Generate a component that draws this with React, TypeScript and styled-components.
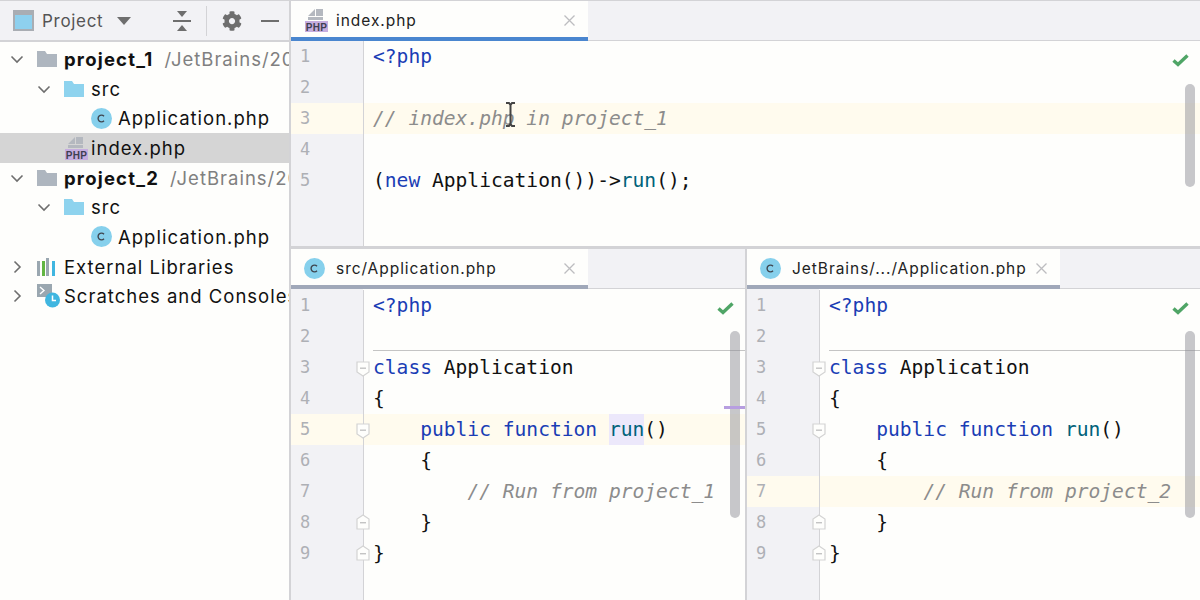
import React from "react";
import styled, { createGlobalStyle } from "styled-components";
import { FaCog } from "react-icons/fa";

const uiFont = `Inter, "Noto Sans", sans-serif`;
const monoFont = `"DejaVu Sans Mono", "Liberation Mono", monospace`;

const GlobalStyle = createGlobalStyle`
  html, body {
    margin: 0;
    padding: 0;
    background: #fefefc;
    overflow: hidden;
  }
`;

const Page = styled.div`
  display: flex;
  width: 1200px;
  height: 600px;
  box-sizing: border-box;
  border-top: 1px solid #d3d3d6;
  background: #fefefc;
  overflow: hidden;
`;

const Sidebar = styled.div`
  width: 291px;
  flex-shrink: 0;
  box-sizing: border-box;
  border-right: 2px solid #d3d3d6;
  display: flex;
  flex-direction: column;
`;

const SideHeader = styled.div`
  height: 39px;
  flex-shrink: 0;
  display: flex;
  align-items: center;
  padding-left: 13px;
  padding-right: 10px;
  background: #f2f2f5;
  border-bottom: 2px solid #d3d3d6;
`;

const SideTitle = styled.span`
  font: 17px ${uiFont};
  letter-spacing: 0.7px;
  color: #555;
  margin-left: 8px;
`;

const Caret = styled.span`
  width: 0;
  height: 0;
  margin-left: 14px;
  border-left: 7px solid transparent;
  border-right: 7px solid transparent;
  border-top: 8px solid #6e6e6e;
`;

const HeaderTools = styled.div`
  margin-left: auto;
  display: flex;
  align-items: center;
  gap: 15px;
`;

const ToolDivider = styled.span`
  width: 1px;
  height: 30px;
  background: #d3d3d6;
`;

const MinusBar = styled.span`
  width: 18px;
  height: 2px;
  margin-left: 4px;
  background: #6e6e6e;
`;

const TreeList = styled.div`
  padding-top: 2px;
`;

const TreeRow = styled.div<{ $level: number; $selected?: boolean }>`
  height: 29.7px;
  box-sizing: border-box;
  display: flex;
  align-items: center;
  white-space: nowrap;
  overflow: hidden;
  padding-left: ${({ $level }) => 10 + $level * 27}px;
  background: ${({ $selected }) => ($selected ? "#d5d5d5" : "transparent")};
`;

const ChevronSlot = styled.span`
  width: 27px;
  flex-shrink: 0;
  display: flex;
  align-items: center;
`;

const TreeIcon = styled.span`
  width: 27px;
  flex-shrink: 0;
  display: flex;
  align-items: center;
`;

const TreeName = styled.span<{ $bold?: boolean }>`
  font: ${({ $bold }) => ($bold ? 700 : 400)} 18.5px ${uiFont};
  letter-spacing: ${({ $bold }) => ($bold ? 1.2 : 1)}px;
  color: #111;
`;

const TreePath = styled.span`
  font: 18.5px ${uiFont};
  letter-spacing: 1px;
  color: #808080;
  margin-left: 11px;
`;

const Main = styled.div`
  flex: 1;
  min-width: 0;
  display: flex;
  flex-direction: column;
`;

const TopPane = styled.div`
  height: 245px;
  flex-shrink: 0;
  display: flex;
  flex-direction: column;
`;

const BottomPanes = styled.div`
  flex: 1;
  min-height: 0;
  display: grid;
  grid-template-columns: 454px 1fr;
  border-top: 3px solid #d3d3d6;
`;

const BottomPane = styled.div<{ $divided?: boolean }>`
  display: flex;
  flex-direction: column;
  min-width: 0;
  border-left: ${({ $divided }) => ($divided ? "2px solid #d3d3d6" : "none")};
`;

const TabStrip = styled.div`
  height: 40px;
  flex-shrink: 0;
  box-sizing: border-box;
  display: flex;
  background: #f2f2f5;
  border-bottom: 1px solid #d3d3d6;
`;

const Tab = styled.div<{ $width: number; $accent: string }>`
  width: ${({ $width }) => $width}px;
  height: calc(100% + 1px);
  box-sizing: border-box;
  display: flex;
  align-items: center;
  padding: 2px 12px 0 13px;
  background: #fefefc;
  border-bottom: 4px solid ${({ $accent }) => $accent};
`;

const TabIcon = styled.span`
  width: 32px;
  flex-shrink: 0;
  display: flex;
  align-items: center;
`;

const TabName = styled.span`
  flex: 1;
  font: 15.5px ${uiFont};
  letter-spacing: 0.95px;
  color: #222;
  white-space: nowrap;
`;

const EditorBody = styled.div`
  position: relative;
  flex: 1;
  min-height: 0;
  overflow: hidden;
`;

const Lines = styled.div<{ $offset: number }>`
  height: 100%;
  box-sizing: border-box;
  display: flex;
  flex-direction: column;
  font: 19.6px/31px ${monoFont};
  color: #111;
  background: linear-gradient(#f2f2f5, #f2f2f5) left top / 72px ${({ $offset }) => $offset}px no-repeat;
  padding-top: ${({ $offset }) => $offset}px;
`;

const LineRow = styled.div<{ $active?: boolean }>`
  display: flex;
  height: 31px;
  flex-shrink: 0;
  background: ${({ $active }) => ($active ? "#fffbee" : "transparent")};
`;

const Filler = styled.div`
  flex: 1;
  display: flex;
`;

const Gutter = styled.div<{ $active?: boolean }>`
  position: relative;
  width: 73px;
  flex-shrink: 0;
  box-sizing: border-box;
  padding-left: 9px;
  font-size: 17px;
  color: #aeb0b5;
  background: ${({ $active }) => ($active ? "#fffbee" : "#f2f2f5")};
  border-right: 1px solid #d3d3d6;
`;

const FoldMark = styled.span<{ $end?: boolean }>`
  position: absolute;
  right: -7px;
  top: ${({ $end }) => ($end ? 7 : 9)}px;
  display: flex;
`;

const Code = styled.pre<{ $separated?: boolean }>`
  position: relative;
  flex: 1;
  margin: 0;
  padding-left: 9px;
  font: inherit;
  white-space: pre;

  ${({ $separated }) =>
    $separated &&
    `&::after {
      content: "";
      position: absolute;
      left: 9px;
      right: 0;
      bottom: 1px;
      height: 1px;
      background: #c4c4c4;
    }`}
`;

const Kw = styled.span`
  color: #1a3db5;
`;

const Fn = styled.span`
  color: #00627a;
`;

const Comment = styled.span`
  color: #8c8c8c;
  font-style: italic;
`;

const Mark = styled.span`
  display: inline-block;
  background: #ece8fb;
`;

const CheckMark = styled.div`
  position: absolute;
  top: 12px;
  right: 11px;
  display: flex;
`;

const Scrollbar = styled.div<{ $top: number; $height: number }>`
  position: absolute;
  top: ${({ $top }) => $top}px;
  right: 5px;
  width: 10px;
  height: ${({ $height }) => $height}px;
  border-radius: 5px;
  background: rgba(140, 140, 148, 0.48);
`;

const ErrorStripe = styled.div`
  position: absolute;
  top: 117px;
  right: 0;
  width: 21px;
  height: 3px;
  background: #b79ee0;
`;

const Cursor = styled.div`
  position: absolute;
  left: 214px;
  top: 61px;
  display: flex;
`;

const PhpIcon = () => (
  <svg width="24" height="24" viewBox="0 0 24 24">
    <path d="M4 8 L11 1 V8 Z M12 1 H19 V8 H12 Z M4 9 H19 V12 H4 Z" fill="#b4b8bf" />
    <rect x="1" y="13" width="23" height="11" fill="#c5addf" />
    <text x="12.5" y="22.5" textAnchor="middle" fontFamily="Liberation Sans" fontWeight="700" fontSize="10" letterSpacing="0.3" fill="#3f3f52">
      PHP
    </text>
  </svg>
);

const ClassIcon = () => (
  <svg width="21" height="21" viewBox="0 0 21 21">
    <circle cx="10.5" cy="10.5" r="10.5" fill="#86d0ec" />
    <path d="M13 8.2 A3.4 3.4 0 1 0 13 12.8" fill="none" stroke="#3f4650" strokeWidth="1.4" />
  </svg>
);

const FolderIcon = ({ color }: { color: string }) => (
  <svg width="20" height="16" viewBox="0 0 20 16">
    <path d="M0 0 H8 L10 3 H20 V16 H0 Z" fill={color} />
  </svg>
);

const Chevron = ({ open }: { open: boolean }) => (
  <svg width="14" height="14" viewBox="0 0 14 14" fill="none" stroke="#6e6e6e" strokeWidth="1.6">
    <path d={open ? "M1.5 4.5 L7 10 L12.5 4.5" : "M4.5 1.5 L10 7 L4.5 12.5"} />
  </svg>
);

const LibrariesIcon = () => (
  <svg width="20" height="18" viewBox="0 0 20 18">
    <rect x="0" y="3" width="3" height="15" fill="#9aa7b0" />
    <rect x="5" y="3" width="3" height="15" fill="#62b543" />
    <rect x="9" y="0" width="3" height="18" fill="#9aa7b0" />
    <rect x="15" y="3" width="3" height="15" fill="#40b6e0" />
  </svg>
);

const ScratchIcon = () => (
  <svg width="23" height="24" viewBox="0 0 23 24">
    <rect x="0" y="0" width="15" height="13" fill="#9aa7b0" />
    <path d="M3 3 L7 6.5 L3 10" fill="none" stroke="#fff" strokeWidth="1.4" />
    <circle cx="15.5" cy="16" r="7.5" fill="#40b6e0" />
    <path d="M15.5 11.5 V16.5 H19" fill="none" stroke="#fff" strokeWidth="1.5" />
  </svg>
);

const WindowIcon = () => (
  <svg width="21" height="21" viewBox="0 0 21 21">
    <rect x="0" y="0" width="21" height="21" fill="#a9adb3" />
    <rect x="2" y="5" width="17" height="14" fill="#8ed0ee" />
  </svg>
);

const CollapseIcon = () => (
  <svg width="18" height="20" viewBox="0 0 18 20" fill="#6e6e6e">
    <path d="M4 0 H14 L9 6 Z" />
    <rect x="0" y="9" width="18" height="2" />
    <path d="M9 14 L14 20 H4 Z" />
  </svg>
);

const CloseIcon = () => (
  <svg width="13" height="13" viewBox="0 0 13 13" stroke="#bdbdc0" strokeWidth="1.3">
    <path d="M1.5 1.5 L11.5 11.5 M11.5 1.5 L1.5 11.5" />
  </svg>
);

const FoldIcon = ({ end }: { end?: boolean }) => (
  <svg width="14" height="16" viewBox="0 0 14 16">
    <g transform={end ? "rotate(180 7 8)" : undefined}>
      <path d="M1 1 H13 V11 L7 15 L1 11 Z" fill="#fefefc" stroke="#d3d3d3" strokeWidth="1.2" />
    </g>
    <rect x="4" y={end ? 8 : 6.5} width="6" height="1.4" fill="#c4c4c4" />
  </svg>
);

const CheckIcon = () => (
  <svg width="17" height="14" viewBox="0 0 17 14">
    <path d="M1.5 7.5 L6 11.5 L15.5 2.5" fill="none" stroke="#4fa566" strokeWidth="3.4" />
  </svg>
);

const IBeam = () => (
  <svg width="11" height="25" viewBox="0 0 11 25" fill="none" stroke="#444">
    <path d="M1 1 H4 L5.5 3 L7 1 H10 M5.5 3 V22 M1 24 H4 L5.5 22 L7 24 H10" strokeWidth="2" />
  </svg>
);

type TLine = { text?: React.ReactNode; fold?: "start" | "end"; active?: boolean; separated?: boolean };

const classLines = (comment: string, active: "method" | "comment", mark: boolean): TLine[] => [
  { text: <Kw>&lt;?php</Kw> },
  { separated: true },
  { text: <><Kw>class</Kw> Application</>, fold: "start" },
  { text: "{" },
  {
    text: <>{"    "}<Kw>public function</Kw> {mark ? <Mark><Fn>run</Fn></Mark> : <Fn>run</Fn>}()</>,
    fold: "start",
    active: active === "method",
  },
  { text: "    {" },
  { text: <>{"        "}<Comment>{comment}</Comment></>, active: active === "comment" },
  { text: "    }", fold: "end" },
  { text: "}", fold: "end" },
];

const indexLines: TLine[] = [
  { text: <Kw>&lt;?php</Kw> },
  {},
  { text: <Comment>// index.php in project_1</Comment>, active: true },
  {},
  { text: <>(<Kw>new</Kw> Application())-&gt;<Fn>run</Fn>();</> },
];

const CodeArea = ({ lines, offset }: { lines: TLine[]; offset: number }) => (
  <Lines $offset={offset}>
    {lines.map((line, i) => (
      <LineRow key={i} $active={line.active}>
        <Gutter $active={line.active}>
          {i + 1}
          {line.fold && (
            <FoldMark $end={line.fold === "end"}>
              <FoldIcon end={line.fold === "end"} />
            </FoldMark>
          )}
        </Gutter>
        <Code $separated={line.separated}>{line.text}</Code>
      </LineRow>
    ))}
    <Filler>
      <Gutter />
    </Filler>
  </Lines>
);

const tree = [
  { level: 0, chevron: "open", icon: <FolderIcon color="#aeb6bf" />, name: "project_1", bold: true, path: "/JetBrains/2020.2/demo" },
  { level: 1, chevron: "open", icon: <FolderIcon color="#8ed3ee" />, name: "src" },
  { level: 2, icon: <ClassIcon />, name: "Application.php" },
  { level: 1, icon: <PhpIcon />, name: "index.php", selected: true },
  { level: 0, chevron: "open", icon: <FolderIcon color="#aeb6bf" />, name: "project_2", bold: true, path: "/JetBrains/2020.2/demo" },
  { level: 1, chevron: "open", icon: <FolderIcon color="#8ed3ee" />, name: "src" },
  { level: 2, icon: <ClassIcon />, name: "Application.php" },
  { level: 0, chevron: "closed", icon: <LibrariesIcon />, name: "External Libraries" },
  { level: 0, chevron: "closed", icon: <ScratchIcon />, name: "Scratches and Consoles" },
];

export default function App() {
  return (
    <Page>
      <GlobalStyle />
      <Sidebar>
        <SideHeader>
          <WindowIcon />
          <SideTitle>Project</SideTitle>
          <Caret />
          <HeaderTools>
            <CollapseIcon />
            <ToolDivider />
            <FaCog size={20} color="#6e6e6e" />
            <MinusBar />
          </HeaderTools>
        </SideHeader>
        <TreeList>
          {tree.map((item, i) => (
            <TreeRow key={i} $level={item.level} $selected={item.selected}>
              <ChevronSlot>{item.chevron && <Chevron open={item.chevron === "open"} />}</ChevronSlot>
              <TreeIcon>{item.icon}</TreeIcon>
              <TreeName $bold={item.bold}>{item.name}</TreeName>
              {item.path && <TreePath>{item.path}</TreePath>}
            </TreeRow>
          ))}
        </TreeList>
      </Sidebar>

      <Main>
        <TopPane>
          <TabStrip>
            <Tab $width={297} $accent="#4a86cf">
              <TabIcon><PhpIcon /></TabIcon>
              <TabName>index.php</TabName>
              <CloseIcon />
            </Tab>
          </TabStrip>
          <EditorBody>
            <CodeArea lines={indexLines} offset={0} />
            <CheckMark><CheckIcon /></CheckMark>
            <Scrollbar $top={43} $height={103} />
            <Cursor><IBeam /></Cursor>
          </EditorBody>
        </TopPane>

        <BottomPanes>
          <BottomPane>
            <TabStrip>
              <Tab $width={297} $accent="#a0a8b9">
                <TabIcon><ClassIcon /></TabIcon>
                <TabName>src/Application.php</TabName>
                <CloseIcon />
              </Tab>
            </TabStrip>
            <EditorBody>
              <CodeArea lines={classLines("// Run from project_1", "method", true)} offset={1} />
              <CheckMark><CheckIcon /></CheckMark>
              <Scrollbar $top={42} $height={187} />
              <ErrorStripe />
            </EditorBody>
          </BottomPane>
          <BottomPane $divided>
            <TabStrip>
              <Tab $width={313} $accent="#a0a8b9">
                <TabIcon><ClassIcon /></TabIcon>
                <TabName>JetBrains/.../Application.php</TabName>
                <CloseIcon />
              </Tab>
            </TabStrip>
            <EditorBody>
              <CodeArea lines={classLines("// Run from project_2", "comment", false)} offset={1} />
              <CheckMark><CheckIcon /></CheckMark>
              <Scrollbar $top={42} $height={187} />
            </EditorBody>
          </BottomPane>
        </BottomPanes>
      </Main>
    </Page>
  );
}
